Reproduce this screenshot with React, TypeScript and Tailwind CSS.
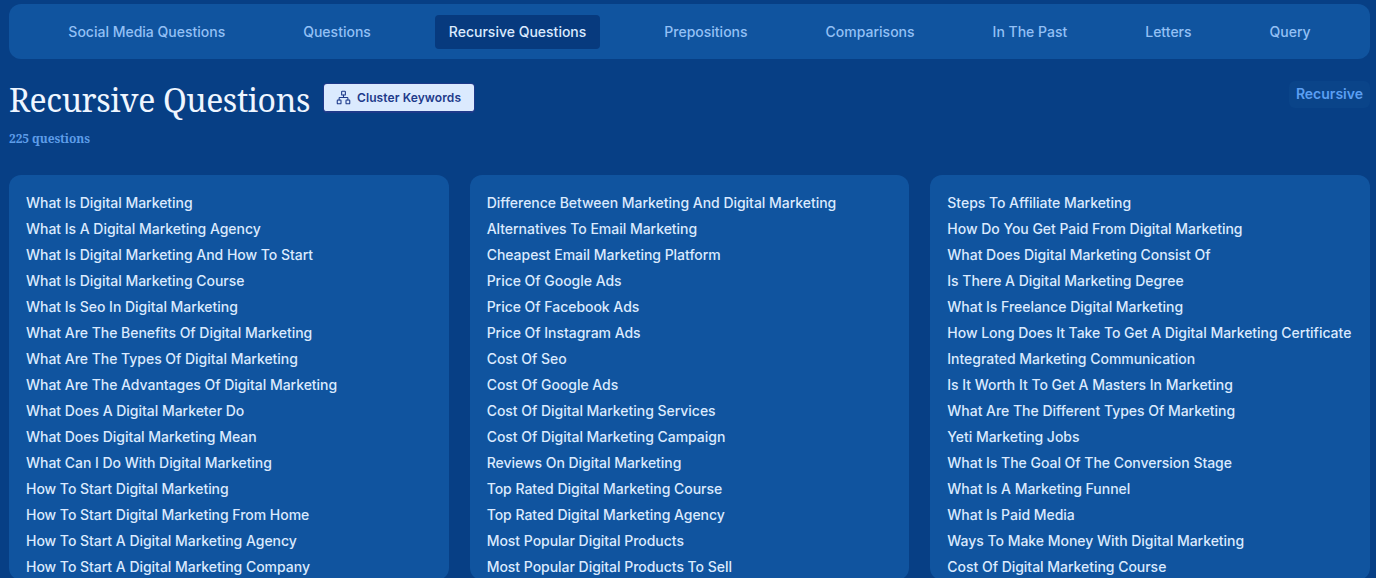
import { Network } from "lucide-react";

const tabs = [
  "Social Media Questions",
  "Questions",
  "Recursive Questions",
  "Prepositions",
  "Comparisons",
  "In The Past",
  "Letters",
  "Query",
];

const columns = [
  [
    "What Is Digital Marketing",
    "What Is A Digital Marketing Agency",
    "What Is Digital Marketing And How To Start",
    "What Is Digital Marketing Course",
    "What Is Seo In Digital Marketing",
    "What Are The Benefits Of Digital Marketing",
    "What Are The Types Of Digital Marketing",
    "What Are The Advantages Of Digital Marketing",
    "What Does A Digital Marketer Do",
    "What Does Digital Marketing Mean",
    "What Can I Do With Digital Marketing",
    "How To Start Digital Marketing",
    "How To Start Digital Marketing From Home",
    "How To Start A Digital Marketing Agency",
    "How To Start A Digital Marketing Company",
  ],
  [
    "Difference Between Marketing And Digital Marketing",
    "Alternatives To Email Marketing",
    "Cheapest Email Marketing Platform",
    "Price Of Google Ads",
    "Price Of Facebook Ads",
    "Price Of Instagram Ads",
    "Cost Of Seo",
    "Cost Of Google Ads",
    "Cost Of Digital Marketing Services",
    "Cost Of Digital Marketing Campaign",
    "Reviews On Digital Marketing",
    "Top Rated Digital Marketing Course",
    "Top Rated Digital Marketing Agency",
    "Most Popular Digital Products",
    "Most Popular Digital Products To Sell",
  ],
  [
    "Steps To Affiliate Marketing",
    "How Do You Get Paid From Digital Marketing",
    "What Does Digital Marketing Consist Of",
    "Is There A Digital Marketing Degree",
    "What Is Freelance Digital Marketing",
    "How Long Does It Take To Get A Digital Marketing Certificate",
    "Integrated Marketing Communication",
    "Is It Worth It To Get A Masters In Marketing",
    "What Are The Different Types Of Marketing",
    "Yeti Marketing Jobs",
    "What Is The Goal Of The Conversion Stage",
    "What Is A Marketing Funnel",
    "What Is Paid Media",
    "Ways To Make Money With Digital Marketing",
    "Cost Of Digital Marketing Course",
  ],
];

export default function App() {
  return (
    <div className="h-[578px] overflow-hidden bg-[#073f85] pl-[9px] pr-[6px] pt-[4px] font-['Inter',sans-serif]">
      {/* Tabs */}
      <nav className="flex h-[55px] items-center justify-center gap-[50px] rounded-xl bg-[#10549f]">
        {tabs.map((tab) => (
          <a
            key={tab}
            className={
              tab === "Recursive Questions"
                ? "flex h-[34px] items-center rounded bg-[#073a7e] px-[14px] text-sm font-medium text-[#dbeafe]"
                : "flex h-[34px] items-center rounded px-[14px] text-sm font-medium text-[#93c0f5]"
            }
          >
            {tab}
          </a>
        ))}
      </nav>

      {/* Heading */}
      <div className="flex items-start justify-between pt-[21px]">
        <div>
          <div className="flex items-start gap-[14px]">
            <h1 className="font-['Noto_Serif',serif] text-[32px] leading-[40px] tracking-[-0.4px] text-[#eff6ff]">
              Recursive Questions
            </h1>
            <button className="mt-[4px] flex h-[28px] w-[150px] items-center gap-[6px] rounded-[3px] border-b border-[#1e3a8a] bg-[#dbeafe] pl-[12px] text-xs font-semibold tracking-[0.1px] text-[#1e3a8a] shadow-[0_0_0_1px_#1e3a8a]">
              <Network size={15} strokeWidth={1.75} />
              Cluster Keywords
            </button>
          </div>
          <p className="mt-[11px] font-['Noto_Serif',serif] text-xs font-bold tracking-[-0.1px] text-[#5d9ce8]">
            225 questions
          </p>
        </div>
        <span className="mt-[1px] flex h-[27px] items-center rounded-md bg-[#0a4489] px-[7px] pb-[2px] text-sm font-semibold text-[#5b9ff2]">
          Recursive
        </span>
      </div>

      {/* Question lists */}
      <div className="mt-[28px] grid grid-cols-3 gap-[21px]">
        {columns.map((col, i) => (
          <ul key={i} className="rounded-xl bg-[#10549f] px-[17px] pt-[14.5px]">
            {col.map((q) => (
              <li
                key={q}
                className="h-[26.07px] text-sm font-medium leading-[26px] tracking-[-0.03px] whitespace-nowrap text-[#dbeafe]"
              >
                {q}
              </li>
            ))}
          </ul>
        ))}
      </div>
    </div>
  );
}
